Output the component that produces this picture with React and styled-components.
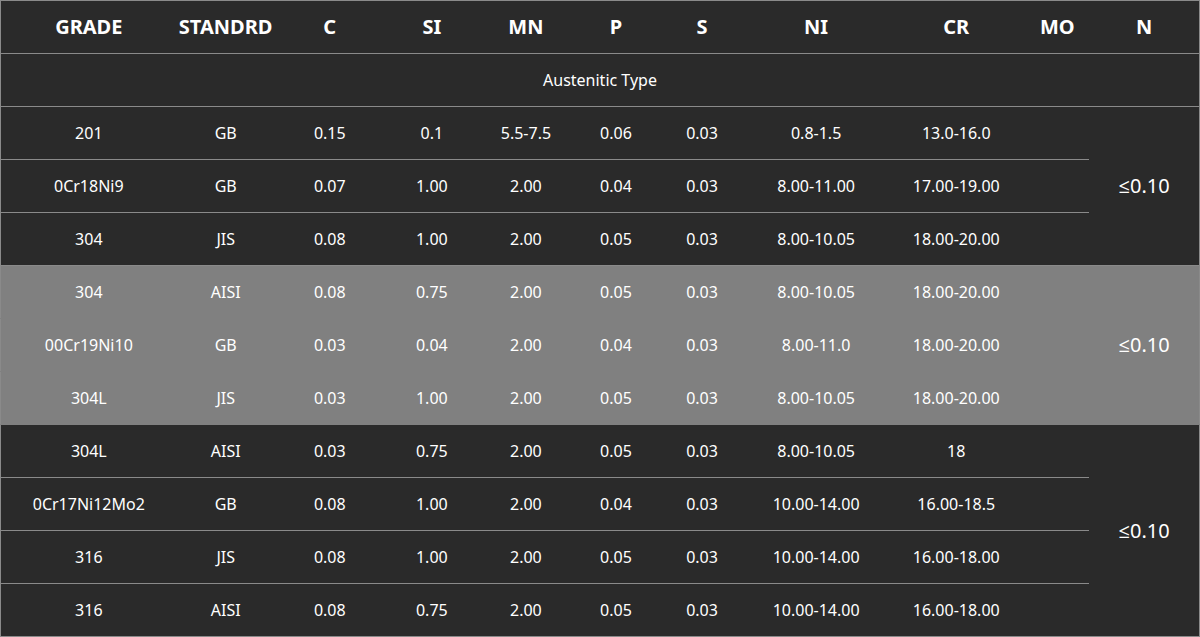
import React from 'react'
import styled, { createGlobalStyle } from 'styled-components'

const GlobalStyle = createGlobalStyle`
  html, body {
    margin: 0;
    padding: 0;
    background: #ffffff;
  }
  body {
    font-family: 'Noto Sans', 'Open Sans', Arial, sans-serif;
  }
`

const columns = [
  { label: 'GRADE', width: 176 },
  { label: 'STANDRD', width: 98 },
  { label: 'C', width: 110 },
  { label: 'SI', width: 94 },
  { label: 'MN', width: 94 },
  { label: 'P', width: 86 },
  { label: 'S', width: 86 },
  { label: 'NI', width: 142 },
  { label: 'CR', width: 138 },
  { label: 'MO', width: 64 },
  { label: 'N', width: 110 },
]

const groups = [
  {
    n: '≤0.10',
    shaded: false,
    rows: [
      ['201', 'GB', '0.15', '0.1', '5.5-7.5', '0.06', '0.03', '0.8-1.5', '13.0-16.0', ''],
      ['0Cr18Ni9', 'GB', '0.07', '1.00', '2.00', '0.04', '0.03', '8.00-11.00', '17.00-19.00', ''],
      ['304', 'JIS', '0.08', '1.00', '2.00', '0.05', '0.03', '8.00-10.05', '18.00-20.00', ''],
    ],
  },
  {
    n: '≤0.10',
    shaded: true,
    rows: [
      ['304', 'AISI', '0.08', '0.75', '2.00', '0.05', '0.03', '8.00-10.05', '18.00-20.00', ''],
      ['00Cr19Ni10', 'GB', '0.03', '0.04', '2.00', '0.04', '0.03', '8.00-11.0', '18.00-20.00', ''],
      ['304L', 'JIS', '0.03', '1.00', '2.00', '0.05', '0.03', '8.00-10.05', '18.00-20.00', ''],
    ],
  },
  {
    n: '≤0.10',
    shaded: false,
    rows: [
      ['304L', 'AISI', '0.03', '0.75', '2.00', '0.05', '0.03', '8.00-10.05', '18', ''],
      ['0Cr17Ni12Mo2', 'GB', '0.08', '1.00', '2.00', '0.04', '0.03', '10.00-14.00', '16.00-18.5', ''],
      ['316', 'JIS', '0.08', '1.00', '2.00', '0.05', '0.03', '10.00-14.00', '16.00-18.00', ''],
      ['316', 'AISI', '0.08', '0.75', '2.00', '0.05', '0.03', '10.00-14.00', '16.00-18.00', ''],
    ],
  },
]

function App() {
  return (
    <>
      <GlobalStyle />
      <Table>
        <colgroup>
          {columns.map((col) => (
            <col key={col.label} style={{ width: col.width }} />
          ))}
        </colgroup>
        <thead>
          <Row>
            {columns.map((col) => (
              <HeadCell key={col.label}>{col.label}</HeadCell>
            ))}
          </Row>
        </thead>
        <tbody>
          <Row>
            <TypeCell colSpan={columns.length}>Austenitic Type</TypeCell>
          </Row>
          {groups.map((group, gi) =>
            group.rows.map((row, ri) => (
              <Row key={`${gi}-${ri}`} $shaded={group.shaded}>
                {row.map((value, ci) => (
                  <Cell key={ci}>{value}</Cell>
                ))}
                {ri === 0 && (
                  <NCell rowSpan={group.rows.length}>{group.n}</NCell>
                )}
              </Row>
            ))
          )}
        </tbody>
      </Table>
    </>
  )
}

export default App

///// Style //////

const Table = styled.table`
  width: 1200px;
  table-layout: fixed;
  border-collapse: collapse;
  border: 1px solid #8a8a8a;
  background: #2a2a2a;
  color: #ffffff;
`

const Row = styled.tr`
  height: 52px;
  background: ${(p) => (p.$shaded ? '#808080' : 'transparent')};
  border-bottom: 1px solid ${(p) => (p.$shaded ? '#808080' : '#8a8a8a')};
`

const HeadCell = styled.th`
  padding: 0;
  height: 52px;
  line-height: 22px;
  text-align: center;
  vertical-align: middle;
  font-size: 20px;
  font-weight: 700;
`

const TypeCell = styled.td`
  padding: 0;
  height: 52px;
  line-height: 20px;
  text-align: center;
  vertical-align: middle;
  font-size: 16px;
`

const Cell = styled.td`
  padding: 0;
  height: 52px;
  line-height: 20px;
  text-align: center;
  vertical-align: middle;
  font-size: 16px;
  white-space: nowrap;
`

const NCell = styled.td`
  padding: 0;
  line-height: 22px;
  text-align: center;
  vertical-align: middle;
  font-size: 20px;
`
